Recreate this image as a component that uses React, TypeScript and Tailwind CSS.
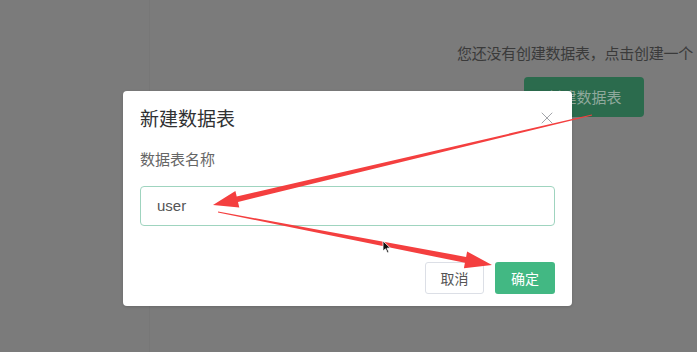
import { X } from 'lucide-react';

type Pt = [number, number];

// tapered annotation arrow: thin tail, wide head
function arrowPoints(tail: Pt, tip: Pt, w0: number, w1: number, headLen: number, headHalf: number) {
  const dx = tip[0] - tail[0];
  const dy = tip[1] - tail[1];
  const len = Math.hypot(dx, dy);
  const ux = dx / len;
  const uy = dy / len;
  const nx = -uy;
  const ny = ux;
  const base: Pt = [tip[0] - ux * headLen, tip[1] - uy * headLen];
  const pts: Pt[] = [
    [tail[0] + (nx * w0) / 2, tail[1] + (ny * w0) / 2],
    [base[0] + (nx * w1) / 2, base[1] + (ny * w1) / 2],
    [base[0] + nx * headHalf, base[1] + ny * headHalf],
    tip,
    [base[0] - nx * headHalf, base[1] - ny * headHalf],
    [base[0] - (nx * w1) / 2, base[1] - (ny * w1) / 2],
    [tail[0] - (nx * w0) / 2, tail[1] - (ny * w0) / 2],
  ];
  return pts.map((p) => `${p[0].toFixed(1)},${p[1].toFixed(1)}`).join(' ');
}

function Annotations() {
  return (
    <svg className="absolute left-0 top-0 pointer-events-none" width="697" height="352" viewBox="0 0 697 352">
      <polygon points={arrowPoints([592, 115], [213, 205], 1, 5.5, 25, 8.5)} fill="#f43f3f" />
      <polygon points={arrowPoints([218, 212], [492, 265], 1, 6, 27, 8.5)} fill="#f43f3f" />
      {/* mouse cursor */}
      <path
        d="M383 241 L383 251 L385.5 248.8 L387.5 253 L389 252.3 L387 248.2 L390.3 248 Z"
        fill="#111"
        stroke="#fff"
        strokeWidth="0.8"
      />
    </svg>
  );
}

export default function App() {
  return (
    <div
      className="relative w-[697px] h-[352px] overflow-hidden bg-[#7b7b7b]"
      style={{ fontFamily: '"Noto Sans CJK SC", "Liberation Sans", sans-serif' }}
    >
      {/* page behind the mask */}
      <div className="flex h-full">
        <div className="w-[150px] h-full border-r border-[#777]" />
        <div className="flex-1 flex flex-col items-end pt-[42px]">
          <p className="text-[15px] leading-[22px] text-[#3a3a3a] whitespace-nowrap mr-[4px] tracking-[-0.25px]">
            您还没有创建数据表，点击创建一个
          </p>
          <button className="mt-[13px] mr-[53px] w-[120px] h-[40px] rounded-[4px] bg-[#2b6b4d] text-[15px] text-[#8fa99c]">
            创建数据表
          </button>
        </div>
      </div>

      {/* dialog */}
      <div className="absolute left-[123px] top-[91px] w-[449px] h-[215px] bg-white rounded-[4px] shadow-[0_1px_3px_rgba(0,0,0,0.15)] px-[17px]">
        <div className="flex items-center justify-between h-[50px] pt-[2px]">
          <h2 className="text-[19px] text-[#303133] leading-none">新建数据表</h2>
          <X className="w-[20px] h-[20px] text-[#909399] -mr-[2px] mt-[2px]" strokeWidth={1} />
        </div>
        <div className="text-[15px] text-[#666] leading-none mt-[10px]">数据表名称</div>
        <div className="mt-[20px] h-[40px] border border-[#9fd4bf] rounded-[4px] flex items-center px-[16px]">
          <span className="text-[15px] text-[#555]" style={{ fontFamily: '"Liberation Sans", sans-serif' }}>
            user
          </span>
        </div>
        <div className="flex justify-end gap-[11px] mt-[36px]">
          <button className="w-[59px] h-[32px] rounded-[3px] border border-[#dcdfe6] bg-white text-[14px] text-[#555]">
            取消
          </button>
          <button className="w-[60px] h-[32px] rounded-[3px] bg-[#42b883] text-[14px] text-white">
            确定
          </button>
        </div>
      </div>

      <Annotations />
    </div>
  );
}
